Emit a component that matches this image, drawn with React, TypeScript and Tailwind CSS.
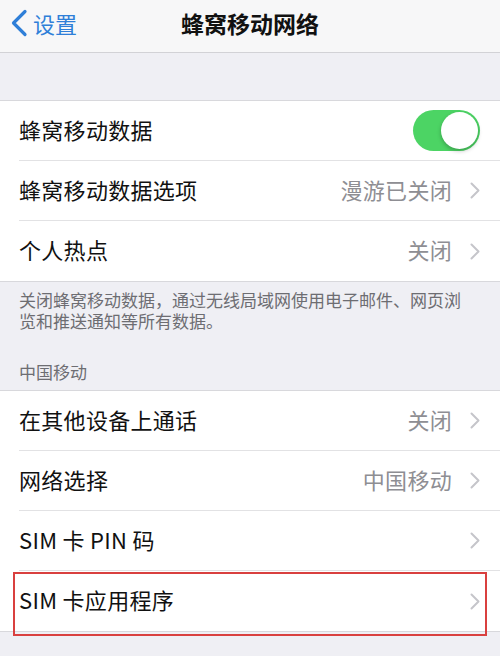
import type { ReactNode } from 'react'

const font = { fontFamily: '"Noto Sans CJK SC", "Noto Sans", sans-serif' }

function Chevron() {
  return (
    <svg width="10" height="17" viewBox="0 0 10 17" className="shrink-0">
      <path
        d="M1.5 1.5 L8.5 8.5 L1.5 15.5"
        fill="none"
        stroke="#c5c5ca"
        strokeWidth="2"
        strokeLinecap="round"
        strokeLinejoin="round"
      />
    </svg>
  )
}

function Toggle() {
  return (
    <div className="relative h-[41px] w-[67px] rounded-full bg-[#4cd464]">
      <div className="absolute top-[2px] right-[2px] h-[37px] w-[37px] rounded-full bg-white shadow-[0_2px_4px_rgba(0,0,0,0.25)]" />
    </div>
  )
}

function Row({
  label,
  value,
  right,
  last,
  children,
}: {
  label: string
  value?: string
  right?: ReactNode
  last?: boolean
  children?: ReactNode
}) {
  return (
    <div className="relative flex h-[60px] items-center pl-[19px]">
      <div
        className={`flex h-full flex-1 items-center pr-[20px] ${
          last ? '' : 'border-b border-[#e2e2e4]'
        }`}
      >
        <span className="flex-1 pb-[3px] text-[22px] tracking-[0.3px] text-[#111]">
          {label}
        </span>
        {right ?? (
          <div className="flex items-center gap-[18px]">
            {value ? (
              <span className="pb-[3px] text-[22px] tracking-[0.3px] text-[#8e8e93]">
                {value}
              </span>
            ) : null}
            <Chevron />
          </div>
        )}
      </div>
      {children}
    </div>
  )
}

export default function App() {
  return (
    <div className="h-[656px] w-[500px] overflow-hidden bg-[#efeff4]" style={font}>
      <div className="relative flex h-[53px] items-center border-b border-[#d2d2d6] bg-[#f7f7f8] pb-[6px]">
        <div className="flex items-center pl-[10px] text-[#2f7fd8]">
          <svg width="18" height="28" viewBox="0 0 18 28">
            <path
              d="M15 2.5 L3.5 14 L15 25.5"
              fill="none"
              stroke="currentColor"
              strokeWidth="3.2"
              strokeLinecap="round"
              strokeLinejoin="round"
            />
          </svg>
          <span className="ml-[5px] text-[22px] leading-none">设置</span>
        </div>
        <span className="absolute left-1/2 -translate-x-1/2 text-[23px] leading-none font-semibold text-[#111]">
          蜂窝移动网络
        </span>
      </div>

      <div className="h-[47px]" />

      <div className="border-y border-[#d8d8dc] bg-white">
        <Row label="蜂窝移动数据" right={<Toggle />} />
        <Row label="蜂窝移动数据选项" value="漫游已关闭" />
        <Row label="个人热点" value="关闭" last />
      </div>

      <div className="px-[19px] pt-[7px] text-[17px] leading-[21px] text-[#6d6d72]">
        <p>关闭蜂窝移动数据，通过无线局域网使用电子邮件、网页浏</p>
        <p>览和推送通知等所有数据。</p>
      </div>
      <div className="px-[19px] pt-[30px] pb-[8px] text-[17px] leading-[21px] text-[#6d6d72]">
        中国移动
      </div>

      <div className="border-y border-[#d8d8dc] bg-white">
        <Row label="在其他设备上通话" value="关闭" />
        <Row label="网络选择" value="中国移动" />
        <Row label="SIM 卡 PIN 码" />
        <Row label="SIM 卡应用程序" last>
          <div className="absolute top-[1px] right-[13px] -bottom-[5px] left-[13px] border-2 border-[#d9403f]" />
        </Row>
      </div>
    </div>
  )
}
